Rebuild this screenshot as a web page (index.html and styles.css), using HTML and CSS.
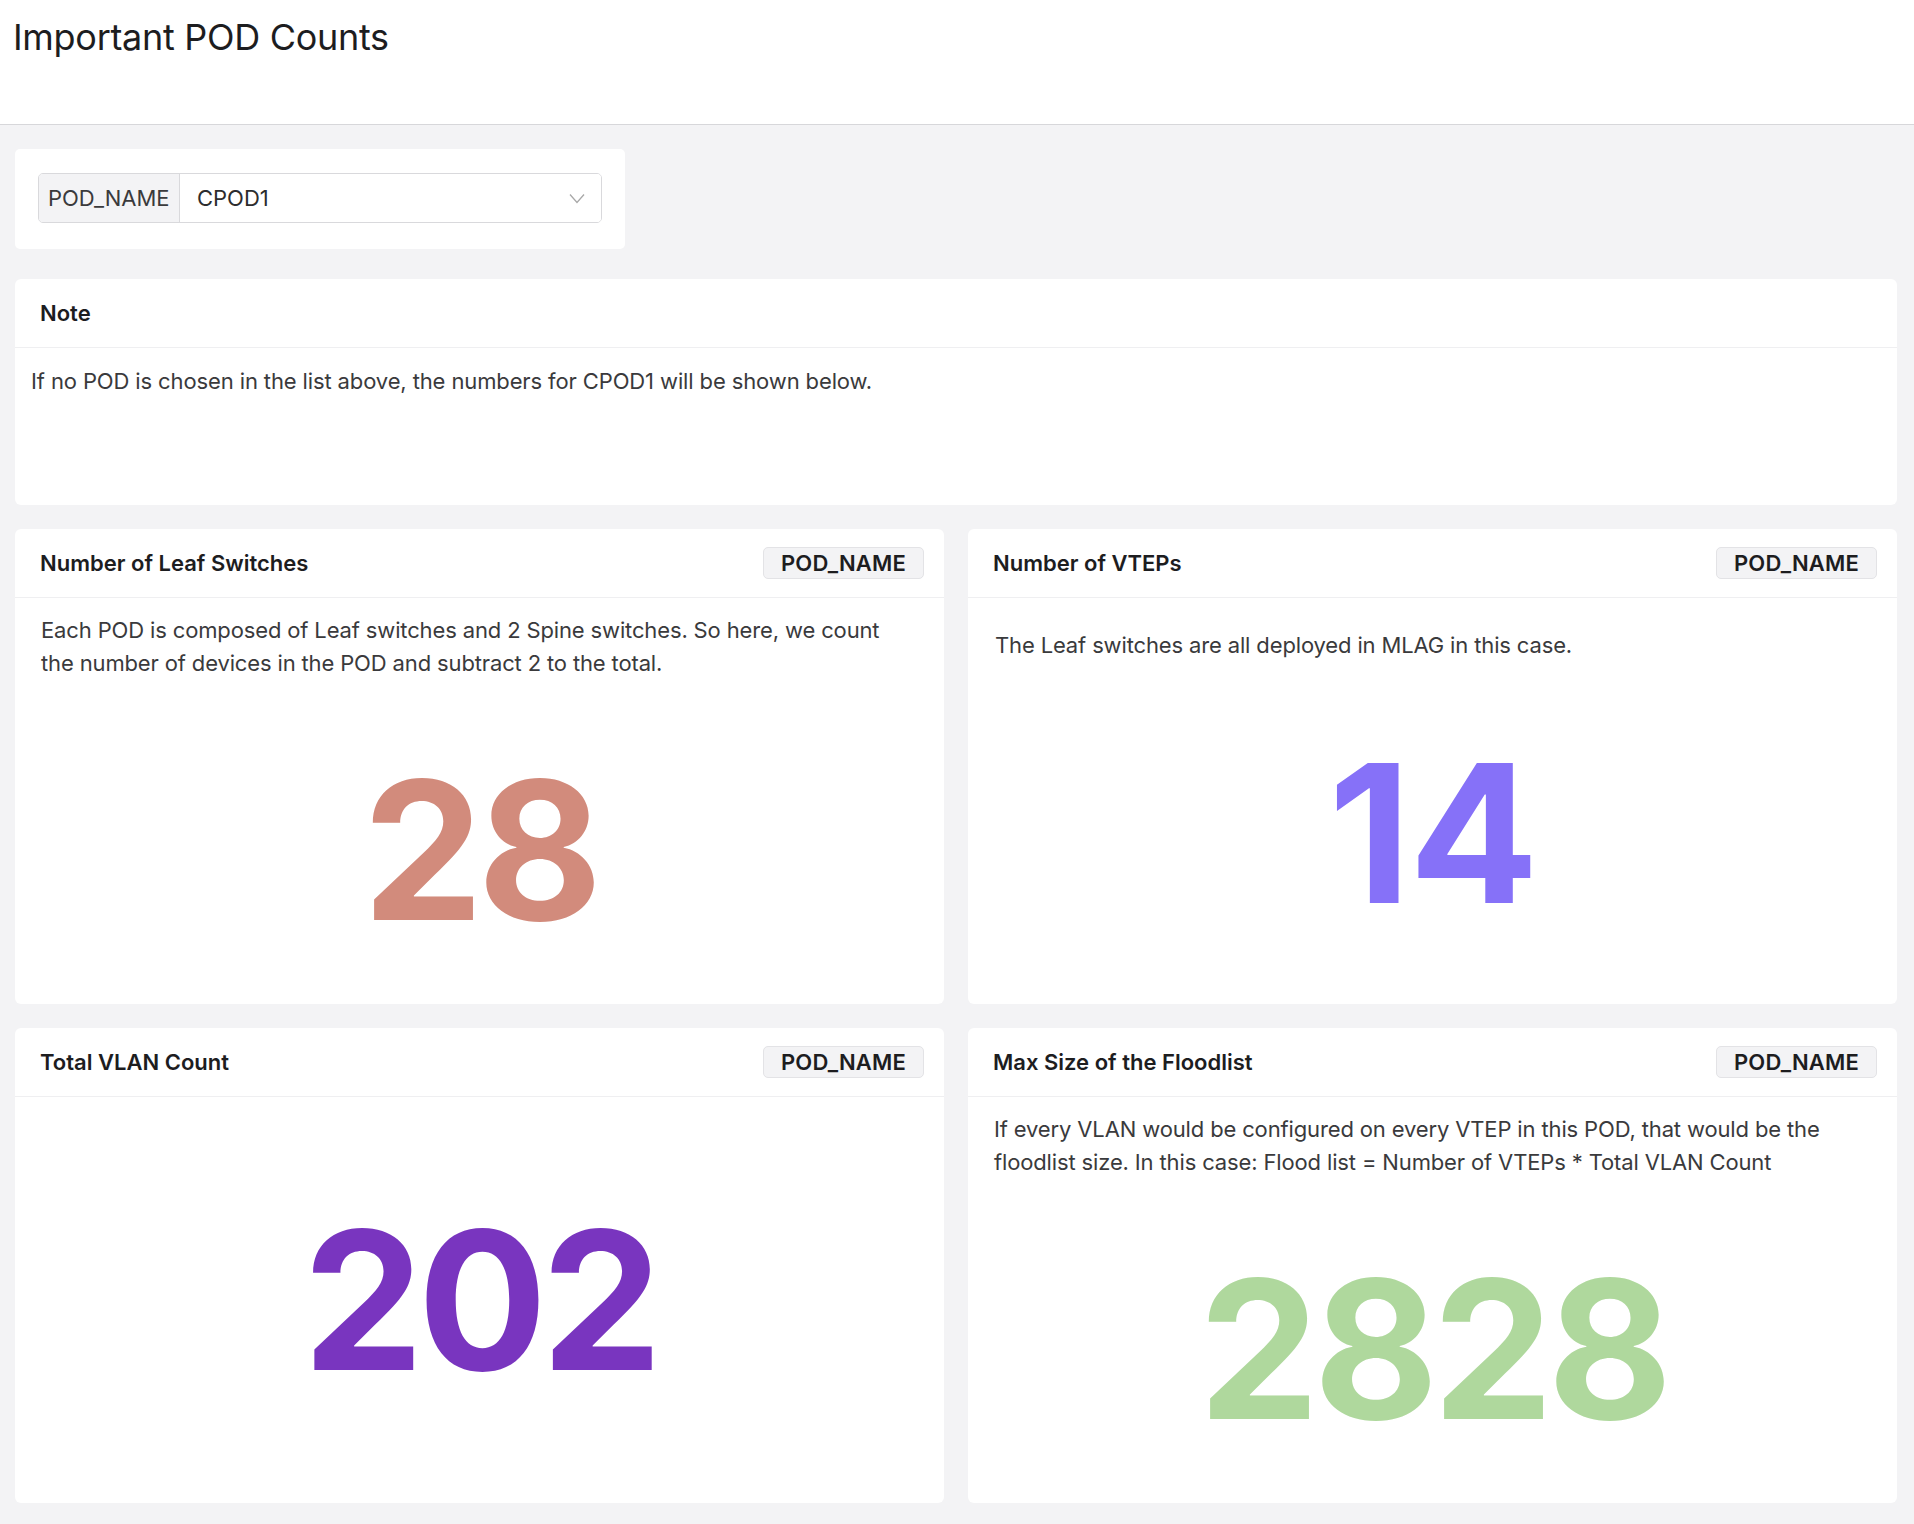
FILE: index.html
```html
<!DOCTYPE html>
<html lang="en">
<head>
<meta charset="utf-8">
<title>Important POD Counts</title>
<link rel="stylesheet" href="styles.css">
</head>
<body>
<header class="topbar">
  <h1 class="page-title">Important POD Counts</h1>
</header>
<main class="content">
  <section class="filter-card">
    <div class="input-group">
      <span class="addon">POD_NAME</span>
      <div class="select">
        <span class="select-value">CPOD1</span>
        <svg class="chevron" width="16" height="11" viewBox="0 0 16 11"><path d="M1 1.5 L8 9.5 L15 1.5" fill="none" stroke="#a8a8a8" stroke-width="1.3"/></svg>
      </div>
    </div>
  </section>

  <section class="card note-card">
    <div class="card-header"><h2 class="card-title">Note</h2></div>
    <div class="note-body">If no POD is chosen in the list above, the numbers for CPOD1 will be shown below.</div>
  </section>

  <div class="grid">
    <section class="card stat-card">
      <div class="card-header"><h2 class="card-title">Number of Leaf Switches</h2><span class="badge">POD_NAME</span></div>
      <div class="stat-body">
        <p class="desc">Each POD is composed of Leaf switches and 2 Spine switches. So here, we count the number of devices in the POD and subtract 2 to the total.</p>
        <div class="number-wrap"><span class="number n-salmon">28</span></div>
      </div>
    </section>
    <section class="card stat-card">
      <div class="card-header"><h2 class="card-title">Number of VTEPs</h2><span class="badge">POD_NAME</span></div>
      <div class="stat-body">
        <p class="desc desc-single">The Leaf switches are all deployed in MLAG in this case.</p>
        <div class="number-wrap"><span class="number n-violet">14</span></div>
      </div>
    </section>
    <section class="card stat-card">
      <div class="card-header"><h2 class="card-title">Total VLAN Count</h2><span class="badge">POD_NAME</span></div>
      <div class="stat-body">
        <div class="number-wrap"><span class="number n-purple">202</span></div>
      </div>
    </section>
    <section class="card stat-card">
      <div class="card-header"><h2 class="card-title">Max Size of the Floodlist</h2><span class="badge">POD_NAME</span></div>
      <div class="stat-body">
        <p class="desc">If every VLAN would be configured on every VTEP in this POD, that would be the floodlist size. In this case: Flood list = Number of VTEPs * Total VLAN Count</p>
        <div class="number-wrap"><span class="number n-green">2828</span></div>
      </div>
    </section>
  </div>
</main>
</body>
</html>
```
FILE: styles.css
```css
* { box-sizing: border-box; }
html, body { margin: 0; padding: 0; }
body {
  background: #f3f3f5;
  font-family: Inter, "Noto Sans", "Liberation Sans", sans-serif;
  color: #1d1d1f;
  width: 1914px;
  min-height: 1524px;
}
.topbar {
  background: #ffffff;
  height: 125px;
  border-bottom: 1px solid #d7d7da;
  padding: 15px 0 0 13px;
}
.page-title {
  margin: 0;
  font-size: 36px;
  font-weight: 400;
  line-height: 44px;
  letter-spacing: -0.3px;
  color: #1d1d1f;
}
.content {
  padding: 24px 17px 21px 15px;
  display: flex;
  flex-direction: column;
  gap: 24px;
}
.filter-card {
  width: 610px;
  height: 100px;
  background: #fff;
  border-radius: 5px;
  padding: 24px 23px;
  margin-bottom: 6px;
}
.input-group {
  display: flex;
  height: 50px;
  border: 1px solid #d9d9dc;
  border-radius: 5px;
  overflow: hidden;
}
.addon {
  width: 141px;
  flex: none;
  background: #f3f3f5;
  border-right: 1px solid #d9d9dc;
  display: flex;
  align-items: center;
  padding-left: 9px;
  font-size: 22px;
  color: #3a3a3c;
}
.select {
  flex: 1;
  display: flex;
  align-items: center;
  justify-content: space-between;
  padding: 0 16px 0 17px;
  background: #fff;
}
.select-value { font-size: 22px; color: #2c2c2e; }
.chevron { display: block; }
.card {
  background: #fff;
  border-radius: 6px;
}
.card-header {
  height: 69px;
  border-bottom: 1px solid #efeff1;
  display: flex;
  align-items: center;
  justify-content: space-between;
  padding: 0 20px 0 25px;
}
.card-title {
  margin: 0;
  font-size: 22px;
  font-weight: 600;
  color: #1d1d1f;
}
.note-card { height: 226px; }
.note-body {
  padding: 17px 16px;
  font-size: 22px;
  line-height: 33px;
  letter-spacing: -0.12px;
  color: #3a3a3c;
}
.grid {
  display: grid;
  grid-template-columns: 1fr 1fr;
  gap: 24px;
}
.stat-card {
  height: 475px;
  display: flex;
  flex-direction: column;
}
.badge {
  width: 161px;
  height: 32px;
  border: 1px solid #e3e3e6;
  background: #f3f3f5;
  border-radius: 5px;
  display: flex;
  align-items: center;
  justify-content: center;
  font-size: 22px;
  font-weight: 600;
  letter-spacing: 0.2px;
  color: #1d1d1f;
}
.stat-body {
  flex: 1;
  display: flex;
  flex-direction: column;
}
.desc {
  margin: 0;
  height: 98px;
  padding: 16px 26px;
  display: flex;
  align-items: center;
  font-size: 22px;
  line-height: 33px;
  letter-spacing: -0.14px;
  color: #3a3a3c;
}
.desc-single {
  height: 64px;
  align-items: flex-end;
  padding: 0 27px;
}
.number-wrap {
  flex: 1;
  display: flex;
  align-items: center;
  justify-content: center;
}
.number {
  font-size: 192px;
  font-weight: 700;
  line-height: 1;
  letter-spacing: -6px;
}
.n-violet { letter-spacing: -2px; }
.n-salmon { color: #d28b7c; }
.n-violet { color: #8671f8; }
.n-purple { color: #7935bf; }
.n-green { color: #afd89d; }
```
